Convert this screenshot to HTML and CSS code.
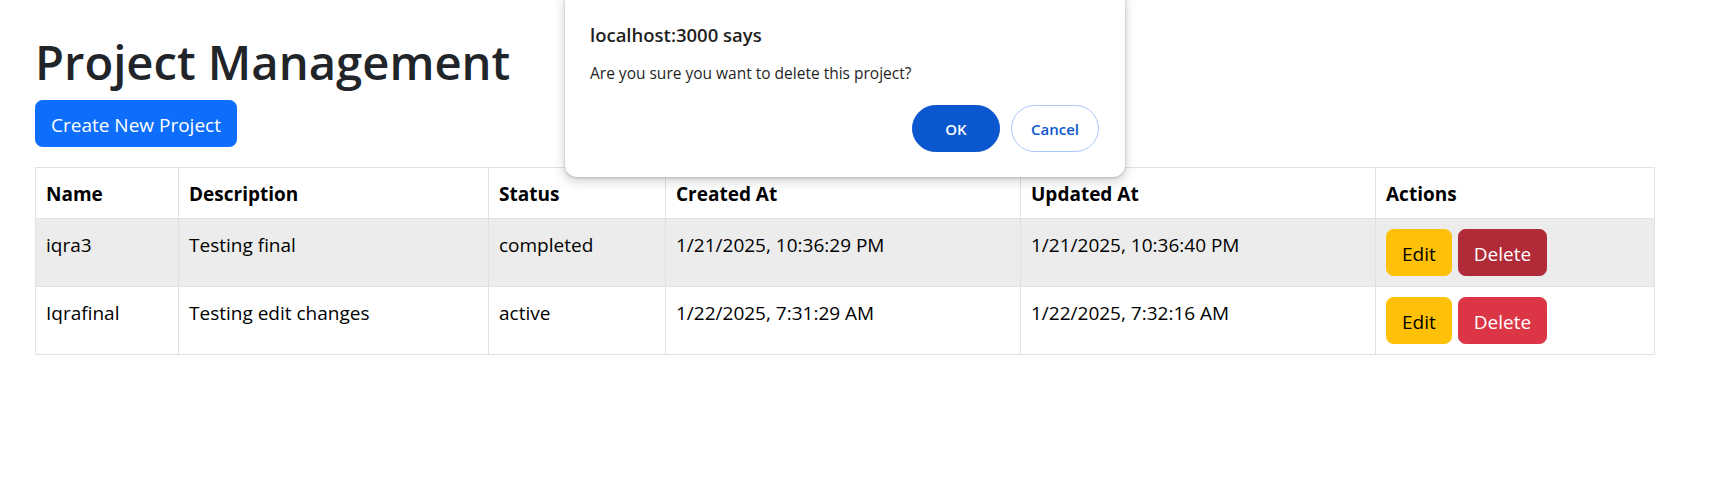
FILE: index.html
```html
<!DOCTYPE html>
<html lang="en">
<head>
<meta charset="utf-8">
<title>Project Management</title>
<link rel="stylesheet" href="styles.css">
</head>
<body>
<div class="page">
  <h1 class="title">Project Management</h1>
  <div class="toolbar">
    <button class="btn btn-primary">Create New Project</button>
  </div>
  <table class="projects">
    <colgroup>
      <col class="c-name"><col class="c-desc"><col class="c-status"><col class="c-created"><col class="c-updated"><col class="c-actions">
    </colgroup>
    <thead>
      <tr><th>Name</th><th>Description</th><th>Status</th><th>Created At</th><th>Updated At</th><th>Actions</th></tr>
    </thead>
    <tbody>
      <tr class="hovered">
        <td>iqra3</td><td>Testing final</td><td>completed</td><td>1/21/2025, 10:36:29 PM</td><td>1/21/2025, 10:36:40 PM</td>
        <td><div class="actions"><button class="btn btn-warning">Edit</button><button class="btn btn-danger active">Delete</button></div></td>
      </tr>
      <tr>
        <td>Iqrafinal</td><td>Testing edit changes</td><td>active</td><td>1/22/2025, 7:31:29 AM</td><td>1/22/2025, 7:32:16 AM</td>
        <td><div class="actions"><button class="btn btn-warning">Edit</button><button class="btn btn-danger">Delete</button></div></td>
      </tr>
    </tbody>
  </table>
</div>

<div class="dialog">
  <div class="dialog-title">localhost:3000 says</div>
  <div class="dialog-message">Are you sure you want to delete this project?</div>
  <div class="dialog-buttons">
    <button class="dbtn dbtn-ok">OK</button>
    <button class="dbtn dbtn-cancel">Cancel</button>
  </div>
</div>
</body>
</html>
```

FILE: styles.css
```css
html, body {
  margin: 0;
  padding: 0;
  background: #fff;
}

body {
  font-family: "Open Sans", "Noto Sans", "Liberation Sans", sans-serif;
  font-size: 19px;
  line-height: 30px;
  color: #212529;
}

.page {
  padding: 30px 55px 0 35px;
}

.title {
  margin: 0 0 8px 0;
  padding-top: 2px;
  font-size: 47.2px;
  line-height: 60px;
  font-weight: 600;
  color: #212529;
}

.toolbar {
  display: flex;
  margin-bottom: 20px;
}

.btn {
  font-family: inherit;
  font-size: 19px;
  line-height: 30px;
  padding: 8.5px 15px 6.5px;
  border: 1px solid transparent;
  border-radius: 7.5px;
  cursor: pointer;
}

.btn-primary {
  background: #0d6efd;
  border-color: #0d6efd;
  color: #fff;
}

.btn-warning {
  background: #ffc107;
  border-color: #ffc107;
  color: #000;
}

.btn-danger {
  background: #dc3545;
  border-color: #dc3545;
  color: #fff;
}

.btn-danger.active {
  background: #b02a37;
  border-color: #b02a37;
}

.projects {
  width: 1619px;
  border-collapse: collapse;
  table-layout: fixed;
  color: #000;
}

.c-name { width: 143px; }
.c-desc { width: 310px; }
.c-status { width: 177px; }
.c-created { width: 355px; }
.c-updated { width: 355px; }
.c-actions { width: 279px; }

.projects th,
.projects td {
  border: 1px solid #dee2e6;
  padding: 11px 10px 9px;
  text-align: left;
  vertical-align: top;
  white-space: nowrap;
}

.projects td:last-child {
  padding-top: 10px;
  padding-bottom: 10px;
}

.projects th {
  font-weight: 700;
}

.projects tr.hovered td {
  background: #ececec;
}

.actions {
  display: flex;
  gap: 6px;
}

.dialog {
  position: absolute;
  left: 565px;
  top: -10px;
  width: 560px;
  box-sizing: border-box;
  padding: 32px 26px 25px 25px;
  background: #fff;
  border-radius: 12px;
  box-shadow: 0 1px 3px rgba(60, 64, 67, 0.3), 0 4px 8px 3px rgba(60, 64, 67, 0.15);
  display: flex;
  flex-direction: column;
  color: #1f1f1f;
}

.dialog-title {
  font-size: 18.5px;
  line-height: 26px;
  font-weight: 600;
}

.dialog-message {
  margin-top: 14px;
  font-size: 15.5px;
  line-height: 22px;
}

.dialog-buttons {
  margin-top: 21px;
  display: flex;
  justify-content: flex-end;
  gap: 11px;
}

.dbtn {
  width: 88px;
  height: 47px;
  border-radius: 24px;
  font-family: inherit;
  font-size: 15px;
  font-weight: 600;
  cursor: pointer;
}

.dbtn-ok {
  background: #0b57d0;
  border: 1px solid #0b57d0;
  color: #fff;
}

.dbtn-cancel {
  background: #fff;
  border: 1px solid #a8c7fa;
  color: #0b57d0;
}
```
